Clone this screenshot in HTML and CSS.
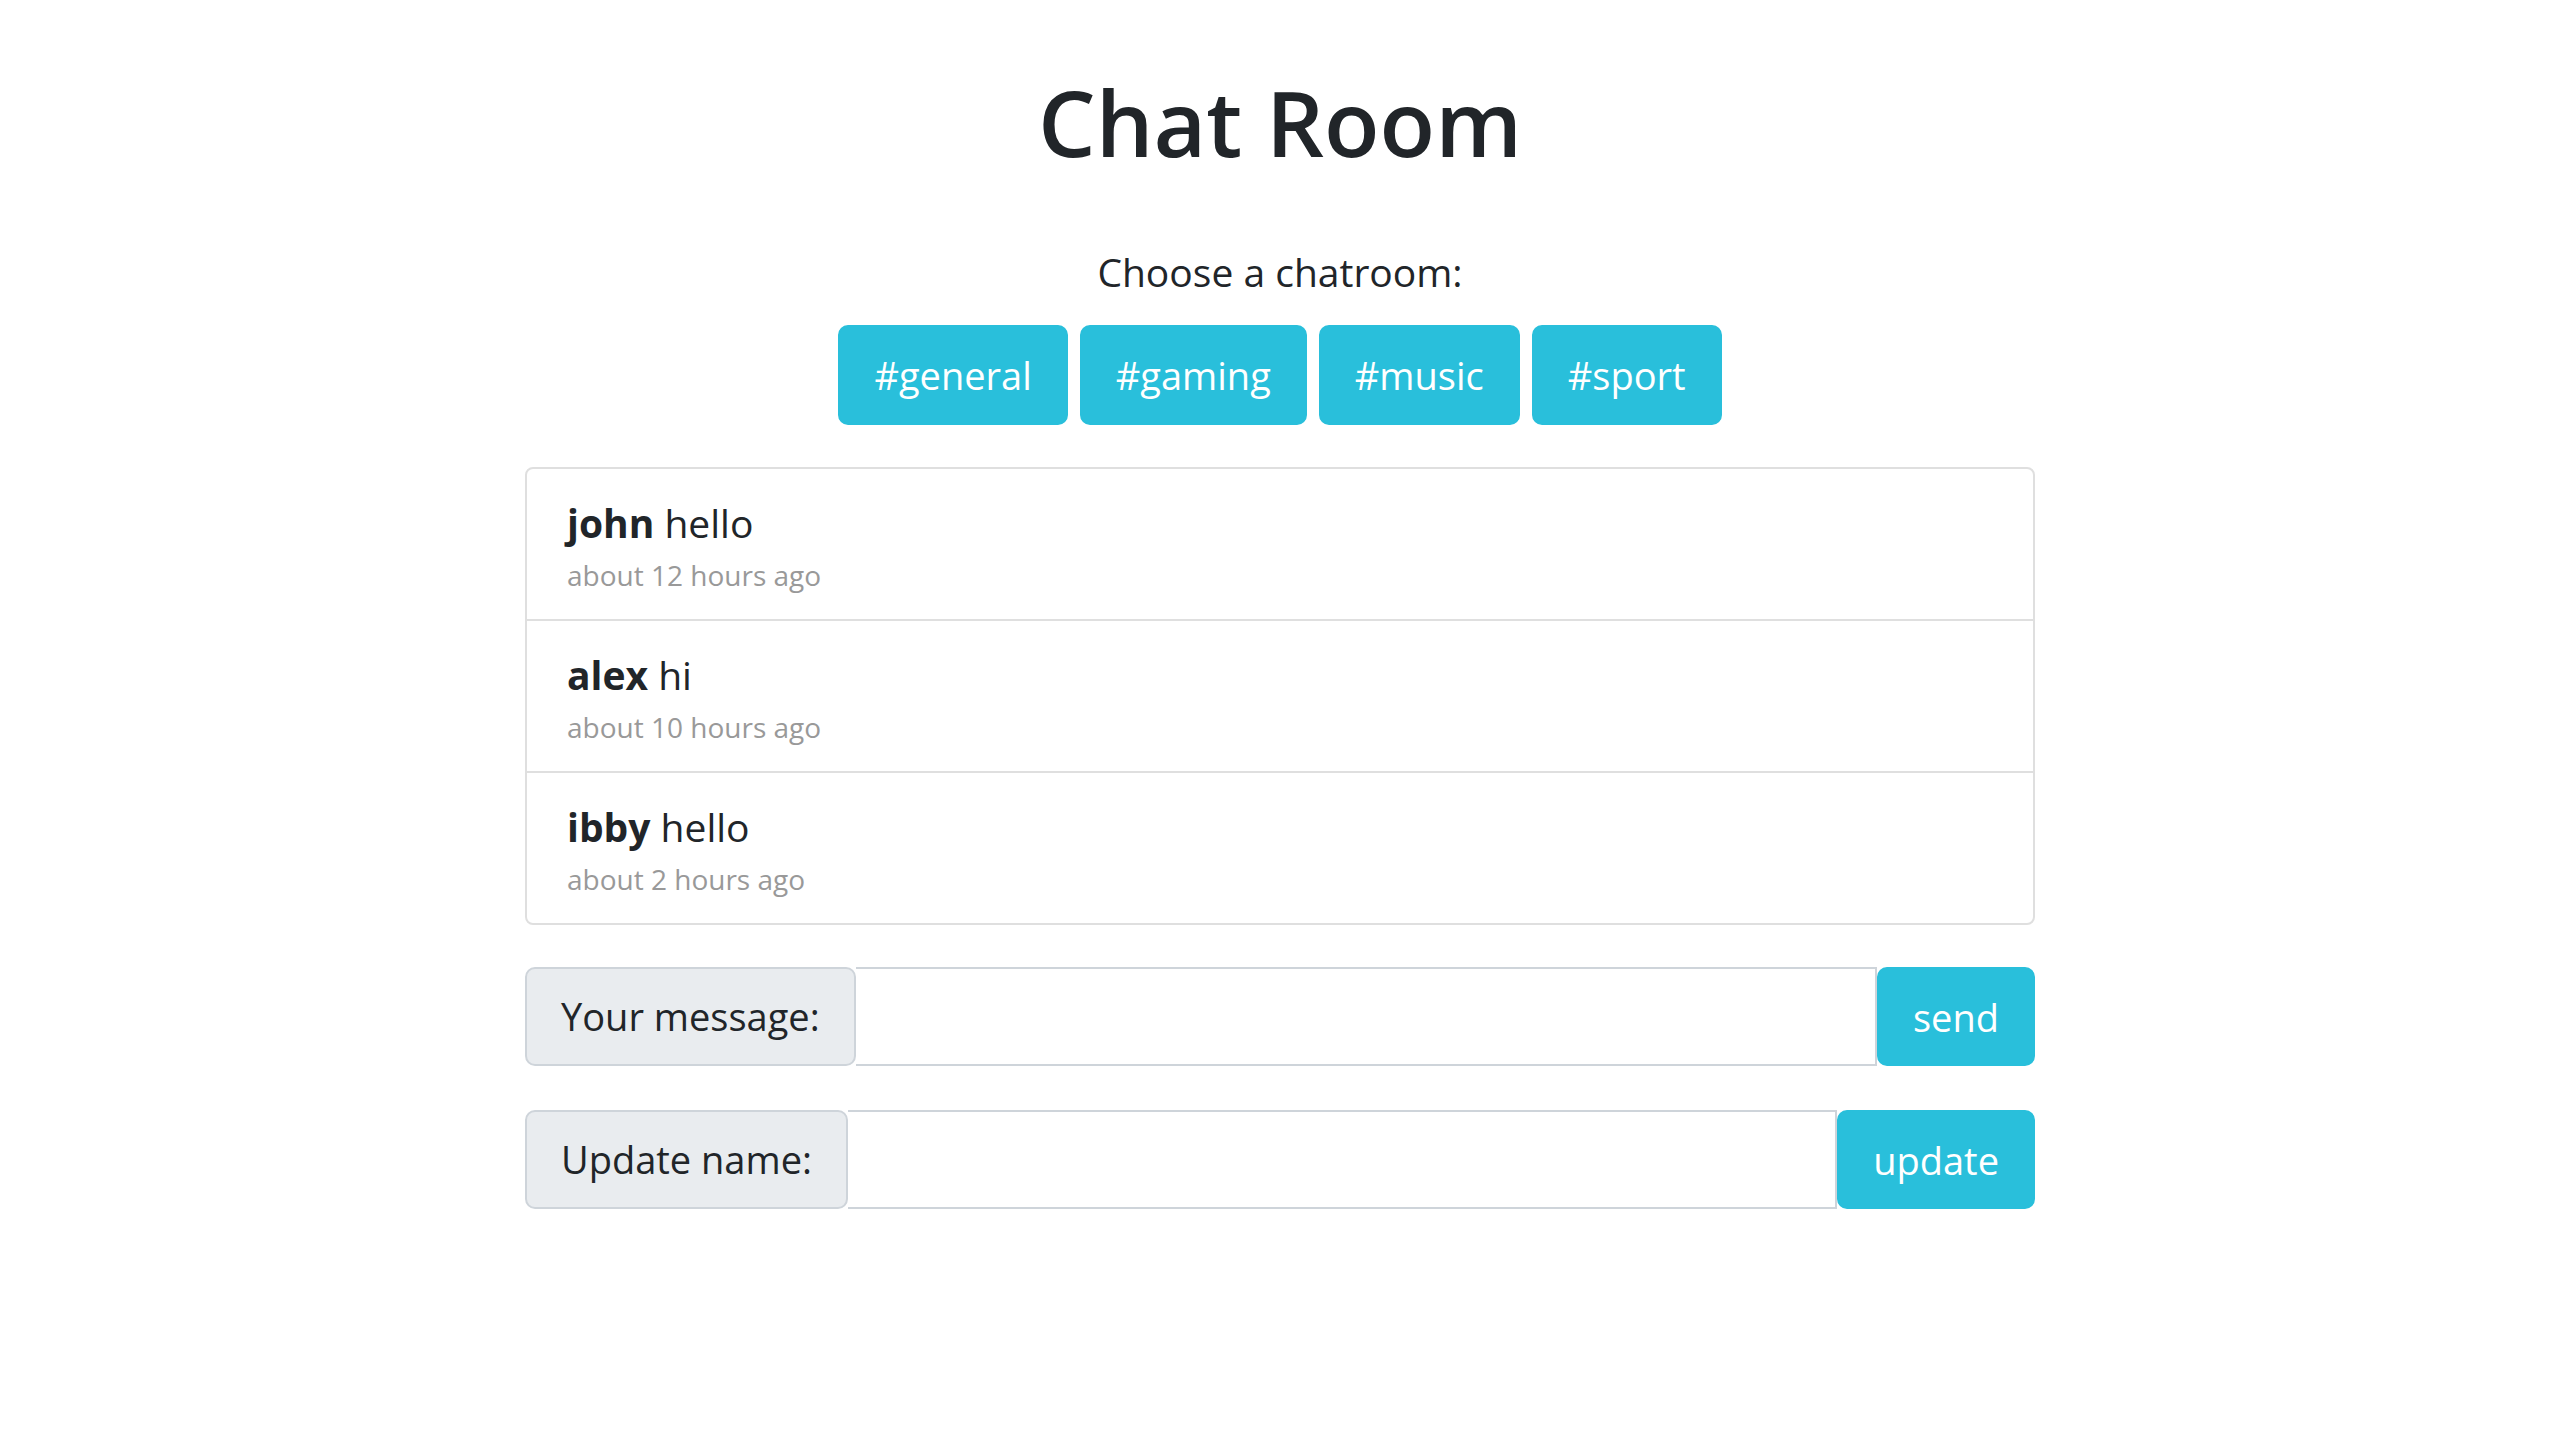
FILE: index.html
```html
<!DOCTYPE html>
<html lang="en">
<head>
<meta charset="utf-8">
<title>Chat Room</title>
<link rel="stylesheet" href="styles.css">
</head>
<body>
<main class="page">
  <h1 class="title">Chat Room</h1>
  <p class="choose">Choose a chatroom:</p>
  <div class="rooms">
    <button class="btn room">#general</button>
    <button class="btn room">#gaming</button>
    <button class="btn room">#music</button>
    <button class="btn room">#sport</button>
  </div>
  <ul class="messages">
    <li class="message">
      <div class="msg-line"><strong class="author">john</strong> hello</div>
      <div class="msg-time">about 12 hours ago</div>
    </li>
    <li class="message">
      <div class="msg-line"><strong class="author">alex</strong> hi</div>
      <div class="msg-time">about 10 hours ago</div>
    </li>
    <li class="message">
      <div class="msg-line"><strong class="author">ibby</strong> hello</div>
      <div class="msg-time">about 2 hours ago</div>
    </li>
  </ul>
  <form class="group group-first">
    <span class="addon">Your message:</span>
    <input class="field" type="text">
    <button class="btn" type="button">send</button>
  </form>
  <form class="group">
    <span class="addon">Update name:</span>
    <input class="field" type="text">
    <button class="btn" type="button">update</button>
  </form>
</main>
</body>
</html>
```

FILE: styles.css
```css
* {
  box-sizing: border-box;
}

body {
  margin: 0;
  background: #ffffff;
  color: #212529;
  font-family: "Open Sans", "Noto Sans", sans-serif;
}

.page {
  width: 1510px;
  margin: 0 auto;
  padding-top: 68px;
}

.title {
  margin: 0;
  font-size: 91px;
  font-weight: 600;
  line-height: 1.2;
  text-align: center;
  color: #212529;
}

.choose {
  margin: 66px 0 0;
  font-size: 39px;
  line-height: 58.5px;
  text-align: center;
}

.rooms {
  display: flex;
  justify-content: center;
  gap: 12px;
  margin-top: 23px;
}

.btn {
  font-family: inherit;
  font-size: 38px;
  line-height: 56px;
  padding: 20px 34px;
  border: 2px solid #29bfdb;
  border-radius: 10px;
  background: #29bfdb;
  color: #ffffff;
  cursor: pointer;
}

.messages {
  list-style: none;
  margin: 42px 0 0;
  padding: 0;
  border: 2px solid #dfdfdf;
  border-radius: 8px;
}

.message {
  padding: 22px 40px;
}

.message + .message {
  border-top: 2px solid #dfdfdf;
}

.msg-line {
  font-size: 39px;
  line-height: 63px;
}

.author {
  font-weight: 700;
}

.msg-time {
  font-size: 28px;
  line-height: 43px;
  color: #999999;
}

.group {
  display: flex;
  height: 99px;
  margin: 44px 0 0;
}

.group-first {
  margin-top: 42px;
}

.addon {
  padding: 20px 34px;
  border: 2px solid #ced4da;
  border-radius: 10px;
  background: #e9ecef;
  font-size: 38px;
  line-height: 55px;
  white-space: nowrap;
}

.field {
  flex: 1;
  min-width: 0;
  margin: 0;
  padding: 0 33px;
  border: 2px solid #ced4da;
  border-left-width: 0;
  background: #ffffff;
  font-family: inherit;
  font-size: 38px;
  outline: none;
}
```
